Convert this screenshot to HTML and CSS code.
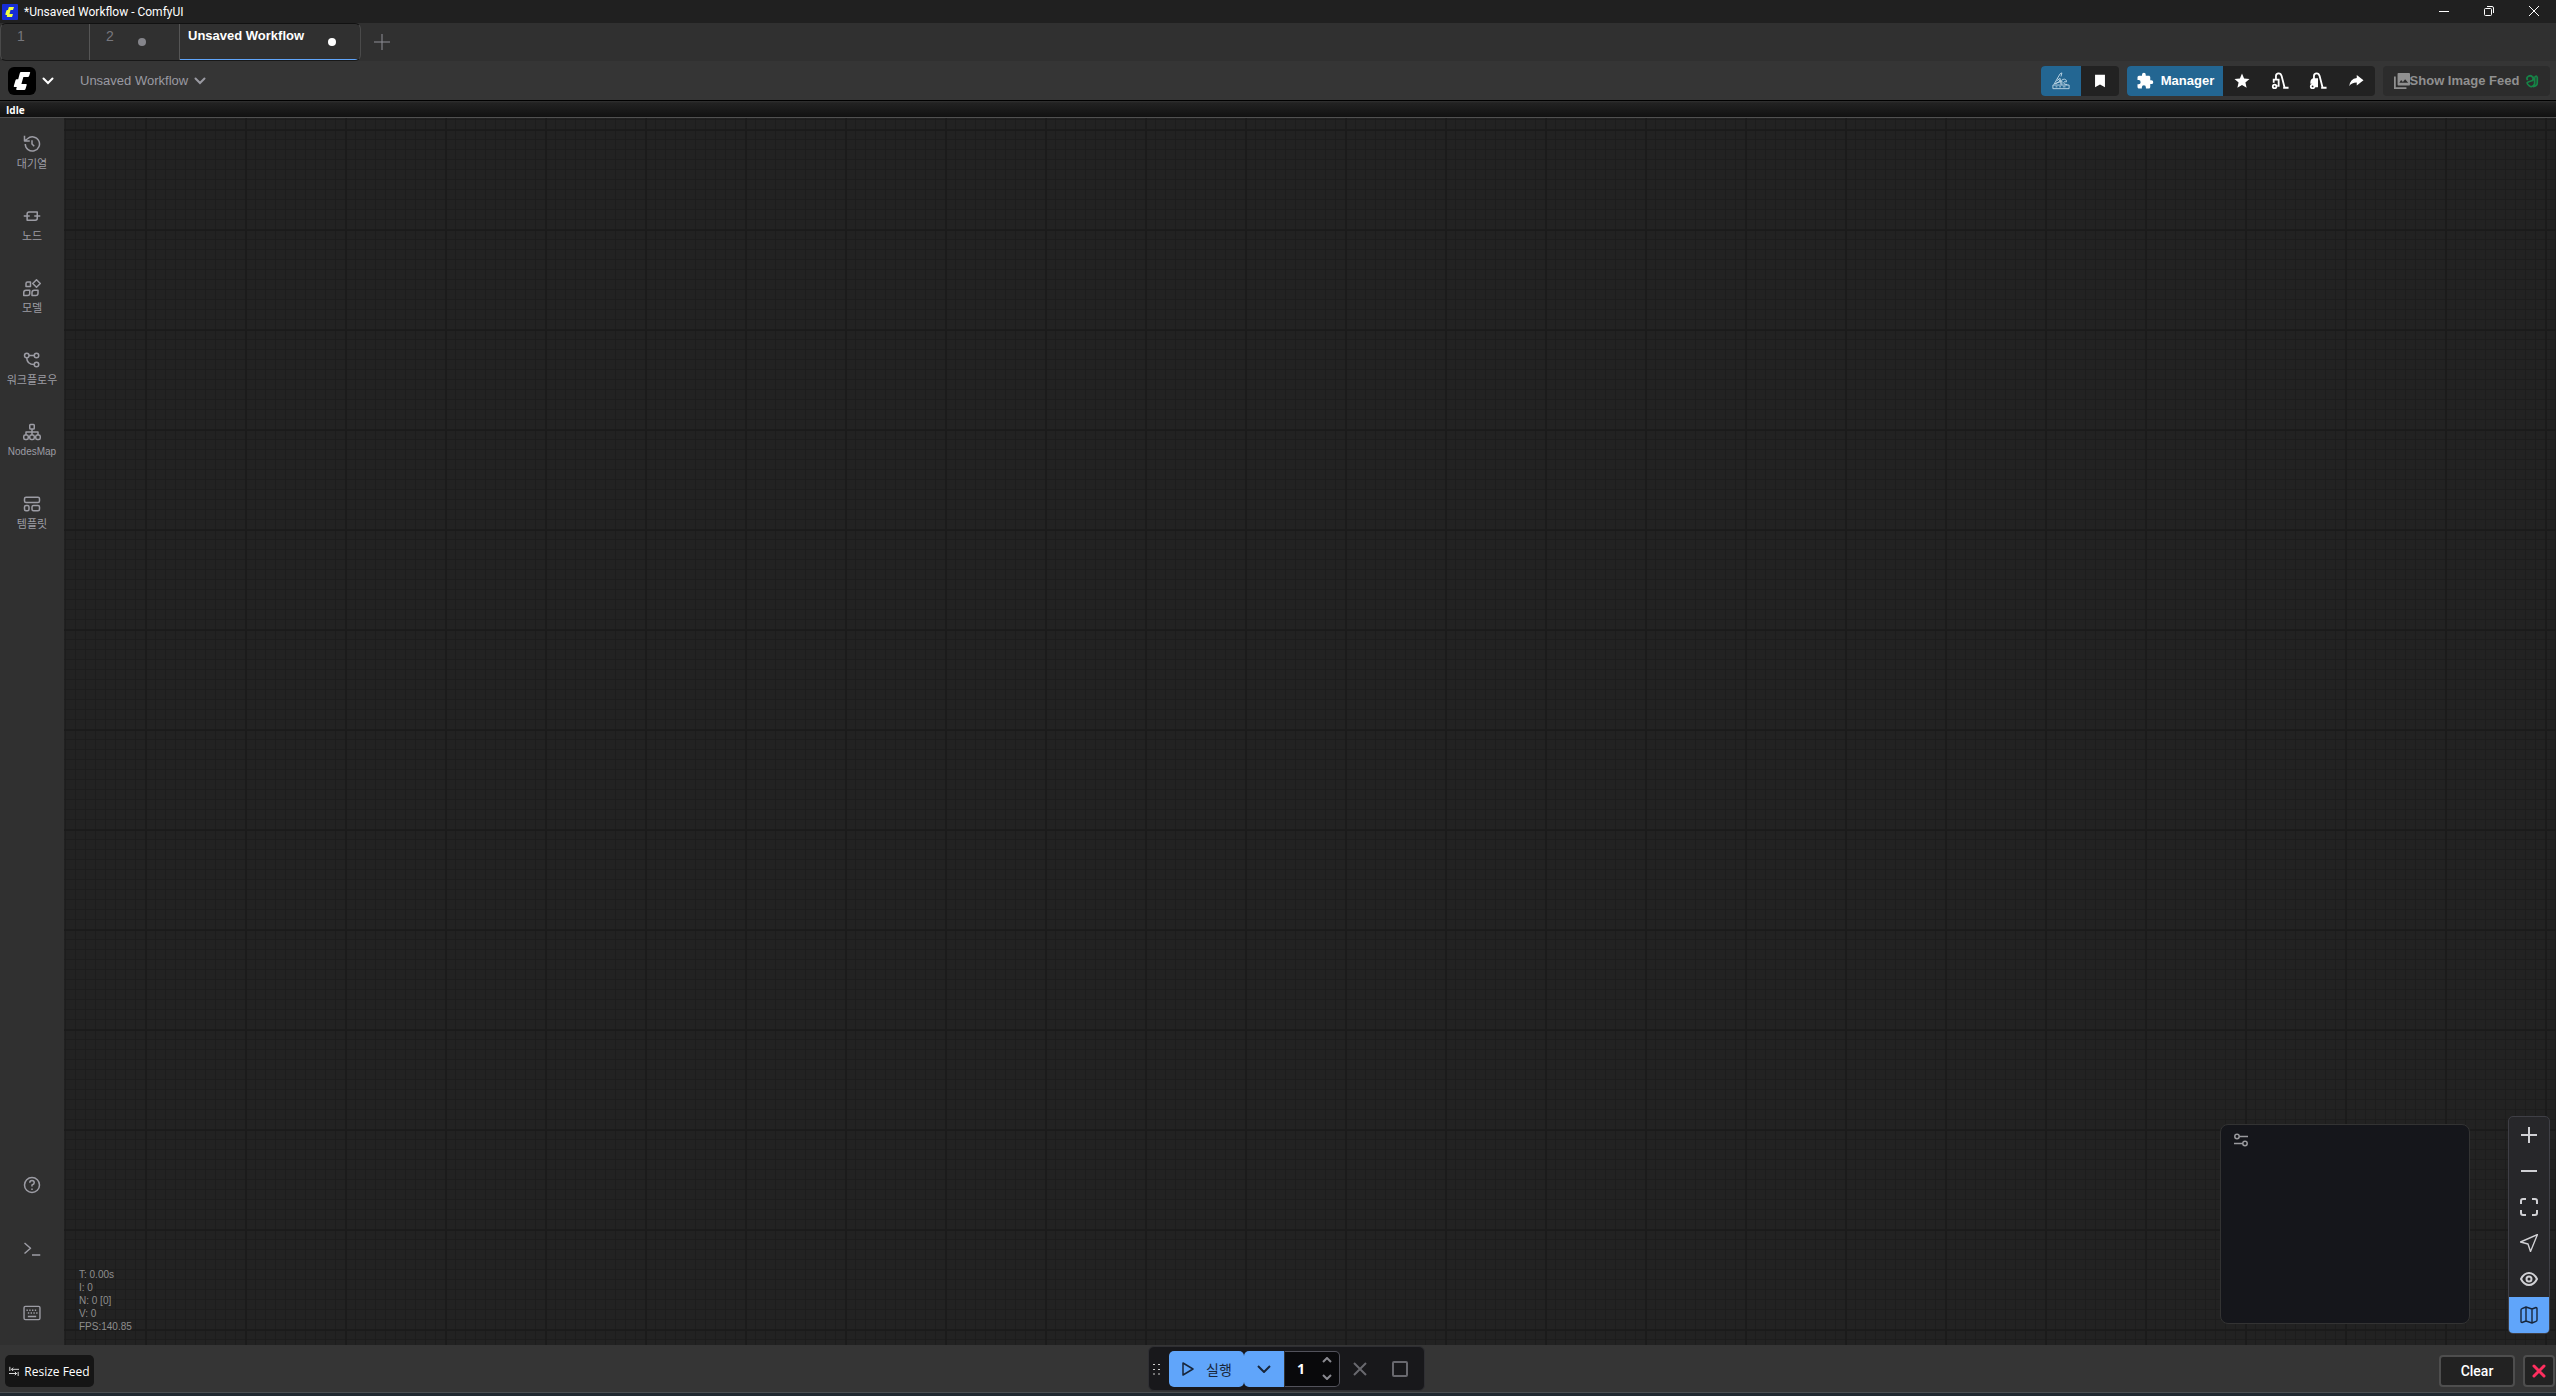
FILE: index.html
```html
<!DOCTYPE html>
<html lang="ko">
<head>
<meta charset="utf-8">
<title>*Unsaved Workflow - ComfyUI</title>
<link rel="stylesheet" href="styles.css">
</head>
<body>
<header class="titlebar">
  <svg class="app-icon" viewBox="0 0 16 16"><rect width="16" height="16" rx="1" fill="#172dd7"/><path d="M7 3h5l-1 3H8.500L7.500 10H11l-1 3H5.500q-1 0-.7-1l.3-1H4q-.8 0-.6-1l1-3.500Q4.600 6 5.400 6H6l.6-2.300Q6.700 3 7 3z" fill="#f0ff41"/></svg>
  <span class="window-title">*Unsaved Workflow - ComfyUI</span>
  <div class="window-controls">
    <button aria-label="Minimize"><svg viewBox="0 0 12 12"><path d="M1 6.500h10"/></svg></button>
    <button aria-label="Restore"><svg viewBox="0 0 12 12"><rect x="1.500" y="3.500" width="7" height="7" rx="1"/><path d="M4 1.500h5q1.500 0 1.500 1.500v5"/></svg></button>
    <button aria-label="Close"><svg viewBox="0 0 12 12"><path d="M1 1l10 10M11 1L1 11"/></svg></button>
  </div>
</header>

<nav class="tabs" aria-label="Workflows">
  <div class="tab-list">
    <button class="tab tab-first">1</button>
    <button class="tab tab-second">2<i class="dot"></i></button>
    <button class="tab tab-active">Unsaved Workflow<i class="dot"></i></button>
  </div>
  <button class="new-tab" aria-label="New workflow"><svg viewBox="0 0 16 16"><path d="M8 0v16M0 8h16"/></svg></button>
</nav>

<div class="menubar">
  <button class="logo-button" aria-label="ComfyUI menu">
    <svg class="logo" viewBox="0 0 28 28"><rect width="28" height="28" rx="6" fill="#000"/><path d="M13 5h8.500q1 0 .6 1l-1 3q-.3 1-1.200 1h-4.500l-2 7h4.600q1 0 .7 1l-1.200 4q-.3 1-1.300 1H9q-1 0-.8-1l.6-2H6.500q-1 0-.7-1l1.800-6q.2-.8 1.100-.8h1.500l1.600-6q.3-1.200 1.200-1.200z" fill="#fff"/></svg>
    <svg class="chevron" viewBox="0 0 12 8"><path d="M1.500 1.500L6 6l4.500-4.500"/></svg>
  </button>
  <button class="workflow-menu">Unsaved Workflow<svg class="chevron" viewBox="0 0 12 8"><path d="M1.500 1.500L6 6l4.500-4.500"/></svg></button>
  <div class="toolbar">
    <div class="button-group">
      <button class="blue icon-button" aria-label="Crystools"><svg class="line-art" viewBox="0 0 20 20"><path d="M1 14.500h18v4H1zM2 14L9 2l2-1-1 4M5 10l4-3 1 7M3 13l6-2M6 7l3 3-5 3M10 11q1-4 4-3t2 3q-3-1-3 1t4 2M11 10v4M4 16.500h2M8 16.500h2M12 16.500h3"/></svg></button>
      <button class="icon-button narrow" aria-label="Bookmarks"><svg viewBox="0 0 20 20"><path d="M4.500 3h11v14L10 14l-5.500 3z"/></svg></button>
    </div>
    <div class="button-group">
      <button class="blue manager"><svg viewBox="0 0 24 24"><path d="M20.500 11H19V7c0-1.100-.9-2-2-2h-4V3.500a2.500 2.500 0 0 0-5 0V5H4a2 2 0 0 0-2 2v3.800h1.500a2.700 2.700 0 0 1 0 5.400H2V20c0 1.100.9 2 2 2h3.800v-1.500a2.700 2.700 0 0 1 5.400 0V22H17a2 2 0 0 0 2-2v-4h1.500a2.500 2.500 0 0 0 0-5z"/></svg>Manager</button>
      <button class="icon-button narrow" aria-label="Favorites"><svg viewBox="0 0 24 24"><path d="M12 17.270L18.180 21l-1.640-7.030L22 9.240l-7.190-.61L12 2 9.190 8.630 2 9.240l5.460 4.730L5.820 21z"/></svg></button>
      <button class="icon-button narrow" aria-label="Unload models"><svg class="vacuum" viewBox="0 0 20 20"><path d="M5.500 8V4.500q0-3 3-3 2.500 0 3.300 3L15 17M3 12V8.500h5.500v7H7M13.500 17.500h6"/><circle cx="4" cy="16" r="2"/></svg></button>
      <button class="icon-button narrow" aria-label="Free model and node cache"><svg class="vacuum" viewBox="0 0 20 20"><path d="M5.500 8V4.500q0-3 3-3 2.500 0 3.300 3L15 17M13.500 17.500h6"/><path d="M2.500 12q0-4 3-4H9v8H7.500Q7 12 2.500 12z" fill="#fff"/><circle cx="4" cy="16" r="2"/></svg></button>
      <button class="icon-button narrow" aria-label="Share"><svg viewBox="0 0 24 24"><path d="M13 8V4l9 7-9 7v-4q-7 0-10 5 1-10 10-11z"/></svg></button>
    </div>
    <button class="feed-button">
      <svg class="images" viewBox="0 0 18 18"><path d="M1 4v13h13" fill="none" stroke="#909090" stroke-width="2"/><path fill-rule="evenodd" d="M5 0h12q1 0 1 1v12q0 1-1 1H5q-1 0-1-1V1q0-1 1-1zm1 11h10l-3.500-4-2.500 3-2-2z"/></svg>Show Image Feed<svg class="python" viewBox="0 0 16 16"><path d="M3 7Q1 4 4 2.500T9 4 7 8 2.500 10 5 13.500t6-2V4M8 8q2-2 1-5M11 4q2-3 3 0v6q0 4-5 4.500"/></svg>
    </button>
  </div>
</div>

<div class="status">Idle</div>

<main class="workspace">
  <aside class="sidebar">
    <button class="side-item hangul"><svg viewBox="0 0 24 24"><path d="M3 12a9.500 9.500 0 1 0 3-7L2 8M2 1v7h7M12 7v5l3 3"/></svg>대기열</button>
    <button class="side-item hangul"><svg viewBox="0 0 24 24"><path d="M1 12h8M15 12h8M8 6.500h11V15q0 2.500-2.500 2.500H5.500V9Q5.500 6.500 8 6.500z"/></svg>노드</button>
    <button class="side-item hangul"><svg viewBox="0 0 24 24"><path d="M18 1l5 5-5 5-5-5zM6 4h4v6H4V6q0-2 2-2zM4 15h5v4q0 3-3 3H1v-4q0-3 3-3zM15 15h5v4q0 3-3 3h-5v-4q0-3 3-3z"/></svg>모델</button>
    <button class="side-item hangul"><svg viewBox="0 0 24 24"><circle cx="5" cy="6" r="3"/><circle cx="18" cy="6" r="3"/><circle cx="18" cy="18" r="3"/><path d="M8 6h7M5 9q0 9 10 9"/></svg>워크플로우</button>
    <button class="side-item"><svg viewBox="0 0 24 24"><rect x="9" y="2" width="6" height="6" rx="1"/><rect x="1" y="16" width="6" height="6" rx="2"/><rect x="9" y="16" width="6" height="6" rx="2"/><rect x="17" y="16" width="6" height="6" rx="2"/><path d="M12 8v8M4 16v-4h16v4"/></svg>NodesMap</button>
    <button class="side-item hangul"><svg viewBox="0 0 24 24"><rect x="2" y="3" width="20" height="7" rx="2"/><rect x="2" y="14" width="6" height="7" rx="2"/><rect x="12" y="14" width="10" height="7" rx="2"/></svg>템플릿</button>
    <div class="side-tools">
      <button class="side-tool" aria-label="Help"><svg viewBox="0 0 24 24"><circle cx="12" cy="12" r="10"/><path d="M9 9q0-3 3-3t3 3q0 2-3 3v2M12 16.500v2"/></svg></button>
      <button class="side-tool" aria-label="Console"><svg viewBox="0 0 24 24"><path d="M2 4l8 7-8 7M12 20h11"/></svg></button>
      <button class="side-tool" aria-label="Keyboard shortcuts"><svg viewBox="0 0 26 24"><rect x="1.500" y="2.500" width="23" height="19" rx="2"/><path d="M5 8h2M9 8h2M13 8h2M17 8h2M7 12h2M11 12h2M15 12h2M19 12h2M7 17h12"/></svg></button>
    </div>
  </aside>
  <section class="canvas" aria-label="Graph">
    <p class="stats">T: 0.00s<br>I: 0<br>N: 0 [0]<br>V: 0<br>FPS:140.85</p>
    <div class="minimap"><button aria-label="Minimap options"><svg viewBox="0 0 14 14"><circle cx="3" cy="3.500" r="2.200"/><path d="M5.200 3.500H14M0 10.500h8.800"/><circle cx="11" cy="10.500" r="2.200"/></svg></button></div>
    <div class="view-controls">
      <button aria-label="Zoom in"><svg viewBox="0 0 18 18"><path d="M9 1v16M1 9h16"/></svg></button>
      <button aria-label="Zoom out"><svg viewBox="0 0 18 18"><path d="M1 9h16"/></svg></button>
      <button aria-label="Fit view"><svg viewBox="0 0 18 18"><path d="M1 6V3q0-2 2-2h3M12 1h3q2 0 2 2v3M17 12v3q0 2-2 2h-3M6 17H3q-2 0-2-2v-3"/></svg></button>
      <button aria-label="Select mode"><svg class="thin" viewBox="0 0 18 18"><path d="M17.500.5L10.500 17.500 8 10 .5 8z"/></svg></button>
      <button aria-label="Toggle links"><svg viewBox="0 0 18 18"><path d="M1 9Q4 3 9 3t8 6q-3 6-8 6T1 9z"/><circle cx="9" cy="9" r="2.500"/></svg></button>
      <button class="selected" aria-label="Toggle minimap"><svg class="thin" viewBox="0 0 18 18"><path d="M1 4q0-1 1-1.300L6 1l6 2 4-1.500q1 0 1 1V14q0 1-1 1.300L12 17l-6-2-4 1.500q-1 0-1-1zM6 1v14M12 3v14"/></svg></button>
    </div>
  </section>
</main>

<footer class="feed-bar">
  <button class="resize"><svg viewBox="0 0 12 12"><path d="M1 1v5M12 4H3M5 2L3 4l2 2M11 7v5M0 9h9M7 7l2 2-2 2"/></svg>Resize Feed</button>
  <div class="actionbar">
    <svg class="grip" viewBox="0 0 8 12"><path d="M0 1.500h2M5 1.500h2M0 6.500h2M5 6.500h2M0 11h2M5 11h2"/></svg>
    <button class="run"><svg viewBox="0 0 14 16"><path d="M2 2l10 6-10 6z"/></svg>실행</button>
    <button class="run-more" aria-label="Run options"><svg viewBox="0 0 14 8"><path d="M1 1l6 6 6-6"/></svg></button>
    <div class="count">
      <input type="text" value="1" aria-label="Batch count">
      <div class="steppers">
        <button aria-label="Increase"><svg viewBox="0 0 10 6"><path d="M1 5l4-4 4 4"/></svg></button>
        <button aria-label="Decrease"><svg viewBox="0 0 10 6"><path d="M1 1l4 4 4-4"/></svg></button>
      </div>
    </div>
    <button class="queue-button" aria-label="Cancel"><svg viewBox="0 0 16 16"><path d="M2 2l12 12M14 2L2 14"/></svg></button>
    <button class="queue-button" aria-label="Clear queue"><svg viewBox="0 0 16 16"><rect x="1" y="1" width="14" height="14" rx="1"/></svg></button>
  </div>
  <button class="outlined clear">Clear</button>
  <button class="outlined close" aria-label="Close feed"><svg viewBox="0 0 14 14"><path d="M2 2l10 10M12 2L2 12"/></svg></button>
</footer>
</body>
</html>
```
FILE: styles.css
```css
* { box-sizing: border-box; }
body {
  margin: 0;
  height: 100vh;
  display: flex;
  flex-direction: column;
  overflow: hidden;
  background: #353535;
  color: #fff;
  font-family: "Liberation Sans", "Noto Sans CJK KR", sans-serif;
  font-size: 13px;
}
button {
  display: flex;
  align-items: center;
  justify-content: center;
  margin: 0;
  padding: 0;
  border: 0;
  background: none;
  color: inherit;
  font: inherit;
}
svg { display: block; flex: none; fill: none; stroke: currentColor; }

.titlebar {
  flex: none;
  display: flex;
  align-items: center;
  height: 23px;
  padding-left: 2px;
  background: #202020;
  font-family: Roboto, sans-serif;
  font-size: 12px;
}
.app-icon { width: 16px; height: 16px; stroke: none; }
.window-title { margin-left: 6px; }
.window-controls { display: flex; margin-left: auto; }
.window-controls button { width: 45px; height: 23px; padding-bottom: 2px; }
.window-controls svg { width: 12px; height: 12px; }

.tabs { flex: none; display: flex; height: 38px; background: #303030; }
.tab-list {
  display: flex;
  border: 1px solid #4a4a4a;
  border-top-color: #111;
  border-bottom-color: #181818;
  border-radius: 6px;
  overflow: hidden;
}
.tab {
  align-items: flex-start;
  justify-content: flex-start;
  padding-top: 4px;
  border-right: 1px solid #555;
  color: #77777d;
}
.tab .dot { width: 8px; height: 8px; margin: 10px 0 0 24px; border-radius: 50%; background: #85858b; }
.tab-first { width: 89px; padding-left: 16px; font-size: 14px; }
.tab-second { width: 90px; padding-left: 16px; font-size: 14px; }
.tab-active {
  width: 180px;
  padding-left: 8px;
  border-right: 0;
  border-bottom: 1px solid #60a5fa;
  color: #fff;
  font-weight: bold;
}
.tab-active .dot { background: #fff; }
.new-tab { width: 41px; color: #8e8e96; }
.new-tab svg { width: 16px; height: 16px; }

.menubar { flex: none; display: flex; align-items: center; height: 39px; padding: 0 6px 0 8px; }
.logo { width: 28px; height: 28px; stroke: none; }
.chevron { width: 12px; height: 8px; stroke-width: 2; stroke-linecap: round; }
.logo-button { gap: 6px; }
.workflow-menu { gap: 6px; margin-left: 26px; color: #9a9aa2; }
.toolbar { display: flex; gap: 8px; margin-left: auto; }
.button-group { display: flex; height: 30px; border-radius: 4px; overflow: hidden; background: #222; }
.button-group svg { width: 18px; height: 18px; fill: #fff; stroke: none; }
.icon-button { width: 40px; }
.narrow { width: 38px; }
.blue { background: #236692; }
.button-group .line-art { fill: none; stroke: #c3dae8; stroke-width: 1; }
.button-group .vacuum { fill: none; stroke: #fff; stroke-width: 2; }
.manager { gap: 7px; width: 96px; font-weight: bold; }
.feed-button { width: 167px; height: 30px; border-radius: 4px; background: #2c2c2c; color: #909090; font-weight: bold; }
.images { width: 16px; height: 16px; fill: #909090; stroke: none; }
.python { width: 14px; height: 14px; margin-left: 6px; color: #168447; stroke-width: 2; }

.status {
  flex: none;
  height: 18px;
  padding-left: 6px;
  border-top: 1px solid #000;
  border-bottom: 1px solid #505050;
  background: linear-gradient(#303030, #222 2px, #111);
  font: bold 10px/18px "Open Sans", sans-serif;
}

.workspace { flex: 1; display: flex; min-height: 0; }
.sidebar { flex: none; display: flex; flex-direction: column; width: 64px; background: #303030; color: #9c9ca4; }
.side-item { flex-direction: column; gap: 4px; height: 72px; padding-bottom: 2px; font-size: 10px; line-height: 14px; }
.hangul { font-size: 11px; }
.sidebar svg { width: 18px; height: 18px; stroke-width: 2; stroke-linejoin: round; }
.side-tools { margin-top: auto; }
.side-tool { width: 64px; height: 64px; }

.canvas {
  position: relative;
  flex: 1;
  background:
    linear-gradient(90deg, #1b1b1b 2px, transparent 2px) 81px 0 / 100px 100px,
    linear-gradient(#1b1b1b 2px, transparent 2px) 0 11px / 100px 100px,
    linear-gradient(90deg, #1d1d1d 1px, transparent 1px) 1px 0 / 10px 10px,
    linear-gradient(#1d1d1d 1px, transparent 1px) 0 1px / 10px 10px,
    #222;
}
.stats { position: absolute; left: 15px; bottom: 12px; margin: 0; color: #8e8e8e; font-size: 10px; line-height: 13px; }
.minimap {
  position: absolute;
  right: 86px;
  bottom: 21px;
  width: 250px;
  height: 200px;
  padding: 8px 13px;
  border: 1px solid #333;
  border-radius: 8px;
  background: #15161b;
  color: #9a9a9e;
}
.minimap svg { width: 14px; height: 14px; stroke-width: 1.5; }
.view-controls {
  position: absolute;
  right: 6px;
  bottom: 11px;
  width: 42px;
  border: 1px solid #3f3f46;
  border-radius: 5px;
  background: #27272a;
  color: #d0d0d4;
  overflow: hidden;
}
.view-controls button { width: 40px; height: 36px; }
.view-controls svg { width: 18px; height: 18px; stroke-width: 2; }
.view-controls .thin { stroke-width: 1.4; stroke-linejoin: round; }
.view-controls .selected { background: #60a5fa; color: #18263a; }

.feed-bar {
  position: relative;
  flex: none;
  display: flex;
  align-items: center;
  gap: 8px;
  height: 51px;
  padding: 0 1px 0 5px;
  border-bottom: 3px solid #20282f;
  box-shadow: inset 0 -1px #4b4f52;
}
.resize { gap: 5px; width: 89px; height: 32px; margin-top: 4px; border-radius: 5px; background: #151515; font: 12px "Open Sans", sans-serif; }
.resize svg { width: 10px; height: 10px; }
.actionbar {
  position: absolute;
  top: 1px;
  left: calc(50% - 130px);
  display: flex;
  align-items: center;
  height: 45px;
  padding: 0 4px;
  border: 1px solid #2f2f33;
  border-radius: 6px;
  background: #18181b;
}
.grip { width: 8px; height: 12px; margin-right: 8px; color: #ccc; }
.run, .run-more { height: 36px; border-radius: 5px; background: #60a5fa; color: #18263a; }
.run { gap: 11px; width: 75px; font-size: 14px; }
.run svg { width: 14px; height: 16px; stroke-width: 1.5; stroke-linejoin: round; }
.run-more { width: 40px; border-radius: 5px 0 0 5px; }
.run-more svg { width: 14px; height: 8px; stroke-width: 2; }
.count { display: flex; width: 56px; height: 36px; border: 1px solid #52525b; border-left-color: #333; border-radius: 0 5px 5px 0; background: #09090b; }
.count input { width: 32px; padding: 0; border: 0; background: none; color: #fff; font: bold 14px "Open Sans", sans-serif; text-align: center; }
.steppers { display: flex; flex-direction: column; justify-content: space-around; color: #8a8a91; }
.steppers button { width: 20px; height: 16px; }
.steppers svg { width: 10px; height: 6px; stroke-width: 2; }
.queue-button { width: 40px; height: 36px; color: #68686e; }
.queue-button svg { width: 16px; height: 16px; stroke-width: 2; }
.outlined { height: 32px; margin-top: 4px; border: 2px solid #4e4e4e; border-radius: 4px; background: #222; }
.clear { width: 76px; margin-left: auto; font: 500 14px Roboto, sans-serif; }
.close { width: 32px; color: #ff2e5f; }
.close svg { width: 14px; height: 14px; stroke-width: 3; stroke-linecap: round; }
```
